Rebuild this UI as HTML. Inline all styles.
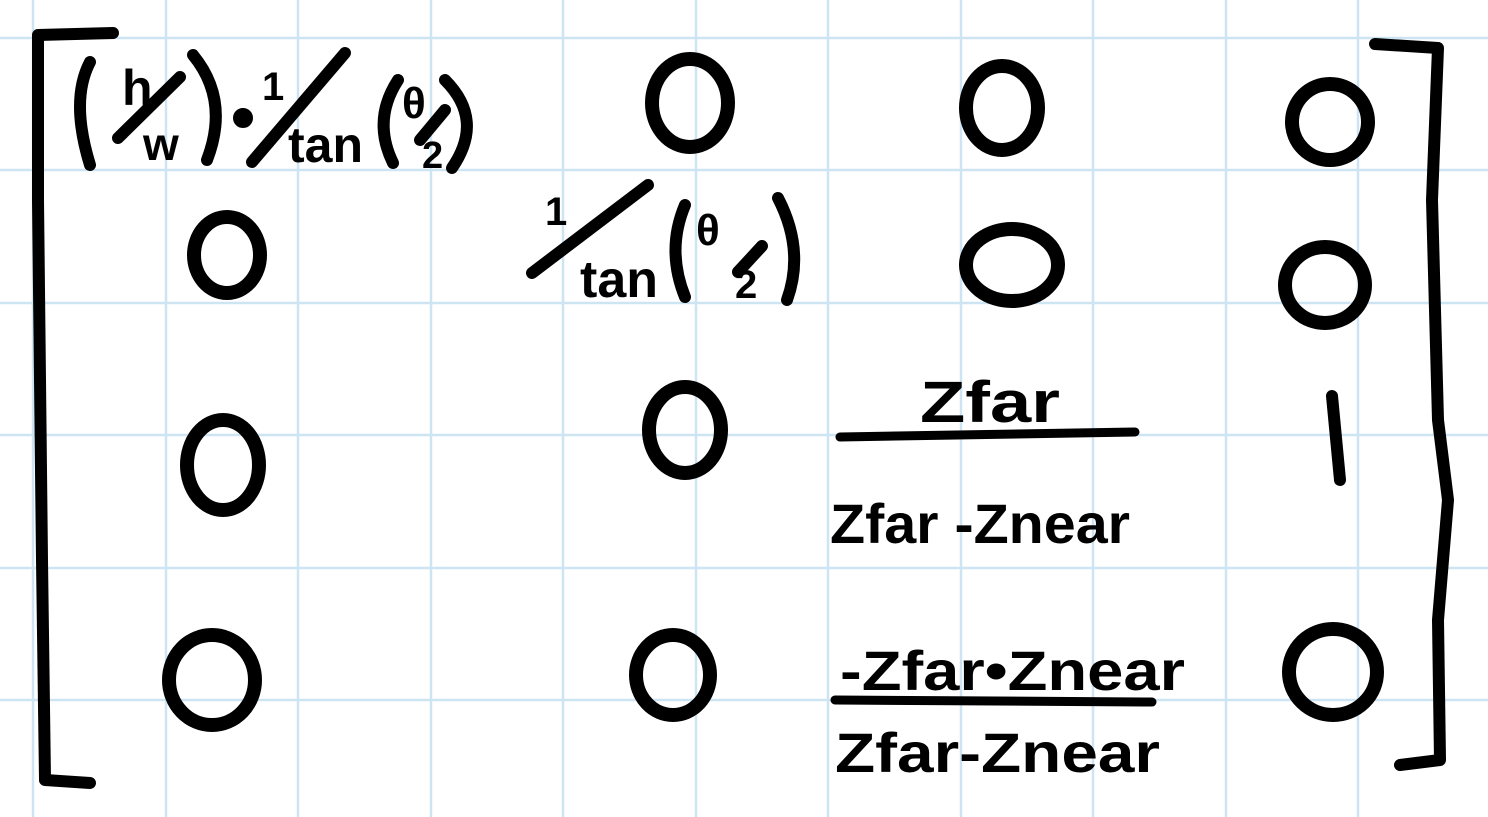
<!DOCTYPE html>
<html><head><style>
html,body{margin:0;padding:0;background:#fff;width:1488px;height:817px;overflow:hidden}
svg{display:block}
text{font-family:"Liberation Sans",sans-serif;font-weight:bold;fill:#000}
</style></head><body>
<svg width="1488" height="817" viewBox="0 0 1488 817" xmlns="http://www.w3.org/2000/svg">
<g stroke="#cde5f3" stroke-width="2.5">
<line x1="33" y1="0" x2="33" y2="817"/><line x1="166" y1="0" x2="166" y2="817"/><line x1="298" y1="0" x2="298" y2="817"/><line x1="431" y1="0" x2="431" y2="817"/><line x1="563" y1="0" x2="563" y2="817"/><line x1="696" y1="0" x2="696" y2="817"/><line x1="828" y1="0" x2="828" y2="817"/><line x1="961" y1="0" x2="961" y2="817"/><line x1="1093" y1="0" x2="1093" y2="817"/><line x1="1226" y1="0" x2="1226" y2="817"/><line x1="1358" y1="0" x2="1358" y2="817"/>
<line x1="0" y1="38" x2="1488" y2="38"/><line x1="0" y1="170" x2="1488" y2="170"/><line x1="0" y1="303" x2="1488" y2="303"/><line x1="0" y1="435" x2="1488" y2="435"/><line x1="0" y1="568" x2="1488" y2="568"/><line x1="0" y1="700" x2="1488" y2="700"/>
</g>
<g fill="none" stroke="#000" stroke-width="12" stroke-linecap="round" stroke-linejoin="round">
<path d="M113 33 L38 35 L38 200 L42 560 L45 780 L90 783"/>
<path d="M1375 44 L1438 48 L1432 200 L1438 420 L1448 500 L1438 620 L1440 760 L1400 765"/>
<path d="M90 62 Q70 100 90 165"/>
<path d="M193 55 Q230 100 207 160"/>
<path d="M118 138 L180 77"/>
<path d="M252 162 L345 53"/>
<path d="M398 80 Q372 120 393 163"/>
<path d="M445 80 Q485 120 452 168"/>
<path d="M420 140 L445 110"/>
<circle cx="243" cy="118" r="4" fill="#000"/>
<path d="M532 273 L648 185"/>
<path d="M685 205 Q666 250 685 297"/>
<path d="M778 198 Q805 250 787 300"/>
<path d="M738 272 L762 246"/>
<g stroke-width="14">
<ellipse cx="690" cy="103" rx="38" ry="44"/>
<ellipse cx="1002" cy="108" rx="36" ry="42"/>
<ellipse cx="1330" cy="122" rx="38" ry="38"/>
<ellipse cx="227" cy="255" rx="33" ry="38"/>
<ellipse cx="1012" cy="265" rx="46" ry="36"/>
<ellipse cx="1325" cy="285" rx="40" ry="38"/>
<ellipse cx="223" cy="465" rx="36" ry="45"/>
<ellipse cx="685" cy="430" rx="36" ry="43"/>
<ellipse cx="212" cy="680" rx="43" ry="45"/>
<ellipse cx="673" cy="675" rx="37" ry="40"/>
<ellipse cx="1333" cy="672" rx="44" ry="43"/>
</g>
<path d="M1332 396 L1340 480"/>
<path d="M840 437 L1135 432" stroke-width="9"/>
<path d="M835 700 L1152 702" stroke-width="9"/>
</g>
<text x="122" y="105" font-size="50">h</text>
<text x="143" y="160" font-size="46">w</text>
<text x="262" y="100" font-size="40">1</text>
<text x="288" y="162" font-size="50">tan</text>
<text x="402" y="118" font-size="44">θ</text>
<text x="422" y="168" font-size="38">2</text>
<text x="545" y="225" font-size="40">1</text>
<text x="580" y="297" font-size="52">tan</text>
<text x="696" y="245" font-size="44">θ</text>
<text x="735" y="298" font-size="40">2</text>
<text x="920" y="422" font-size="58" textLength="140" lengthAdjust="spacingAndGlyphs">Zfar</text>
<text x="830" y="543" font-size="56" textLength="300" lengthAdjust="spacingAndGlyphs">Zfar -Znear</text>
<text x="840" y="690" font-size="56" textLength="345" lengthAdjust="spacingAndGlyphs">-Zfar•Znear</text>
<text x="835" y="772" font-size="56" textLength="325" lengthAdjust="spacingAndGlyphs">Zfar-Znear</text>
</svg>
</body></html>
